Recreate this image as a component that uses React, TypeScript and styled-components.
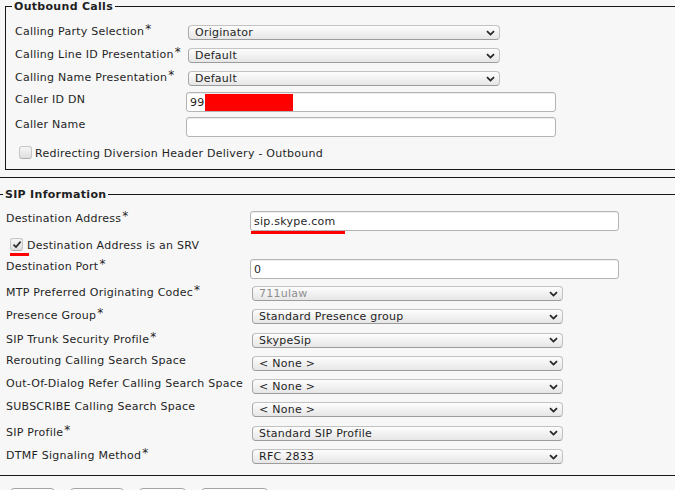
import styled, { createGlobalStyle } from "styled-components";

const GlobalStyle = createGlobalStyle`
  html, body {
    margin: 0;
    background: #f7f7f7;
  }
  body {
    font-family: "DejaVu Sans", Verdana, sans-serif;
    font-size: 11px;
    letter-spacing: 0.25px;
    color: #1f1f1f;
  }
`;

const Page = styled.div`
  width: 675px;
  height: 490px;
  overflow: hidden;
`;

const Fieldset = styled.fieldset<{ $left: number; $indent: number; $top: number; $bottom: number }>`
  margin: 0 0 0 ${(p) => p.$left}px;
  width: 760px;
  min-width: 0;
  box-sizing: border-box;
  border: 1px solid #161616;
  padding: ${(p) => p.$top}px 0 ${(p) => p.$bottom}px ${(p) => p.$indent}px;
`;

const Legend = styled.legend`
  font-weight: bold;
  line-height: 13px;
  letter-spacing: 0.3px;
  padding: 0 2px;
  margin-left: -3px;
`;

const Divider = styled.div`
  margin: 7px 0 10px;
  border-top: 1px solid #161616;
`;

const Row = styled.div<{ $label: number; $h: number; $gap?: number }>`
  display: grid;
  grid-template-columns: ${(p) => p.$label}px auto;
  align-items: start;
  height: ${(p) => p.$h}px;
  margin-top: ${(p) => p.$gap ?? 0}px;
`;

const Label = styled.span<{ $top?: number }>`
  line-height: 13px;
  white-space: nowrap;
  padding-top: ${(p) => p.$top ?? 0}px;
`;

const Req = styled.span`
  font-size: 12px;
  vertical-align: 2px;
  margin-left: 1px;
`;

const Field = styled.div`
  display: flex;
  flex-direction: column;
  align-items: flex-start;
`;

const Select = styled.div<{ $w: number; $disabled?: boolean }>`
  display: flex;
  align-items: center;
  justify-content: space-between;
  box-sizing: border-box;
  width: ${(p) => p.$w}px;
  height: 15px;
  margin: 2px 0 0 2px;
  padding: 0 4px 0 6px;
  border: 1px solid #c2c2c2;
  border-bottom-color: #9c9c9c;
  border-left-color: #a8a8a8;
  border-radius: 4px;
  background: linear-gradient(#fdfdfd, #e6e6e6);
  color: ${(p) => (p.$disabled ? "#8e8e8e" : "#1f1f1f")};
  line-height: 13px;
  white-space: nowrap;
`;

const TextField = styled.div<{ $w: number; $top?: number }>`
  display: flex;
  align-items: center;
  box-sizing: border-box;
  width: ${(p) => p.$w}px;
  height: 20px;
  margin-top: ${(p) => p.$top ?? 0}px;
  padding: 0 3px;
  background: #fff;
  border: 1px solid #b4b4b4;
  border-radius: 3px;
  box-shadow: inset 0 1px 1px rgba(0, 0, 0, 0.07);
  white-space: nowrap;
`;

const Redacted = styled.span`
  display: inline-block;
  width: 88px;
  height: 17px;
  background: #ff0000;
`;

const Mark = styled.div<{ $w: number; $left: number; $top: number }>`
  width: ${(p) => p.$w}px;
  height: 3px;
  margin: ${(p) => p.$top}px 0 0 ${(p) => p.$left}px;
  background: #ff0000;
`;

const CheckRow = styled.label<{ $left: number; $gap: number; $top: number }>`
  display: flex;
  align-items: flex-start;
  gap: ${(p) => p.$gap}px;
  margin: ${(p) => p.$top}px 0 0 ${(p) => p.$left}px;
  line-height: 15px;
`;

const CheckBox = styled.span`
  display: flex;
  align-items: center;
  justify-content: center;
  box-sizing: border-box;
  width: 13px;
  height: 13px;
  border: 1px solid #c6c6c6;
  border-bottom-color: #b0b0b0;
  border-radius: 3px;
  background: linear-gradient(#f6f6f6, #dedede);
`;

const Buttons = styled.div`
  display: flex;
  gap: 15px;
  margin: 12px 0 0 10px;
`;

const Button = styled.button<{ $w: number }>`
  width: ${(p) => p.$w}px;
  height: 22px;
  padding: 0;
  border: 1px solid #a4a4a4;
  border-radius: 4px;
  background: linear-gradient(#ffffff, #e9e9e9);
`;

const Chevron = () => (
  <svg width="9" height="6" viewBox="0 0 9 6">
    <path d="M1 1.2 L4.5 4.6 L8 1.2" fill="none" stroke="#262626" strokeWidth="1.8" />
  </svg>
);

const Tick = () => (
  <svg width="10" height="9" viewBox="0 0 10 9">
    <path d="M1.5 4.6 L4 7 L8.6 1.6" fill="none" stroke="#2a2a2a" strokeWidth="1.7" />
  </svg>
);

type Choice = { label: string; required?: boolean; value: string; disabled?: boolean };

const sipSelects: Choice[] = [
  { label: "MTP Preferred Originating Codec", required: true, value: "711ulaw", disabled: true },
  { label: "Presence Group", required: true, value: "Standard Presence group" },
  { label: "SIP Trunk Security Profile", required: true, value: "SkypeSip" },
  { label: "Rerouting Calling Search Space", value: "< None >" },
  { label: "Out-Of-Dialog Refer Calling Search Space", value: "< None >" },
  { label: "SUBSCRIBE Calling Search Space", value: "< None >" },
  { label: "SIP Profile", required: true, value: "Standard SIP Profile" },
  { label: "DTMF Signaling Method", required: true, value: "RFC 2833" },
];

const outboundSelects: Choice[] = [
  { label: "Calling Party Selection", required: true, value: "Originator" },
  { label: "Calling Line ID Presentation", required: true, value: "Default" },
  { label: "Calling Name Presentation", required: true, value: "Default" },
];

// bottom action buttons are cut off by the viewport, only their tops show
const actionWidths = [45, 54, 47, 67];

function FieldLabel({ text, required, top }: { text: string; required?: boolean; top?: number }) {
  return (
    <Label $top={top}>
      {text}
      {required && <Req>*</Req>}
    </Label>
  );
}

export default function App() {
  return (
    <Page>
      <GlobalStyle />
      <Fieldset $left={5} $indent={9} $top={10} $bottom={8}>
        <Legend>Outbound Calls</Legend>
        {outboundSelects.map((s) => (
          <Row key={s.label} $label={171} $h={23}>
            <FieldLabel text={s.label} required={s.required} />
            <Select $w={312}>
              {s.value}
              <Chevron />
            </Select>
          </Row>
        ))}
        <Row $label={171} $h={25}>
          <FieldLabel text="Caller ID DN" top={1} />
          <TextField $w={370}>
            99
            <Redacted />
          </TextField>
        </Row>
        <Row $label={171} $h={25}>
          <FieldLabel text="Caller Name" top={1} />
          <TextField $w={370} />
        </Row>
        <CheckRow $left={4} $gap={3} $top={4}>
          <CheckBox />
          Redirecting Diversion Header Delivery - Outbound
        </CheckRow>
      </Fieldset>

      <Divider />

      <Fieldset $left={-3} $indent={8} $top={9} $bottom={5}>
        <Legend>SIP Information</Legend>
        <Row $label={244} $h={24}>
          <FieldLabel text="Destination Address" required />
          <Field>
            <TextField $w={369} $top={1}>
              sip.skype.com
            </TextField>
            <Mark $w={94} $left={1} $top={0} />
          </Field>
        </Row>
        <CheckRow $left={4} $gap={4} $top={4}>
          <CheckBox>
            <Tick />
          </CheckBox>
          Destination Address is an SRV
        </CheckRow>
        <Mark $w={19} $left={4} $top={0} />
        <Row $label={244} $h={26} $gap={2}>
          <FieldLabel text="Destination Port" required />
          <TextField $w={369} $top={1}>
            0
          </TextField>
        </Row>
        {sipSelects.map((s) => (
          <Row key={s.label} $label={244} $h={23.3}>
            <FieldLabel text={s.label} required={s.required} />
            <Select $w={311} $disabled={s.disabled}>
              {s.value}
              <Chevron />
            </Select>
          </Row>
        ))}
      </Fieldset>

      <Buttons>
        {actionWidths.map((w, i) => (
          <Button key={i} $w={w} />
        ))}
      </Buttons>
    </Page>
  );
}
